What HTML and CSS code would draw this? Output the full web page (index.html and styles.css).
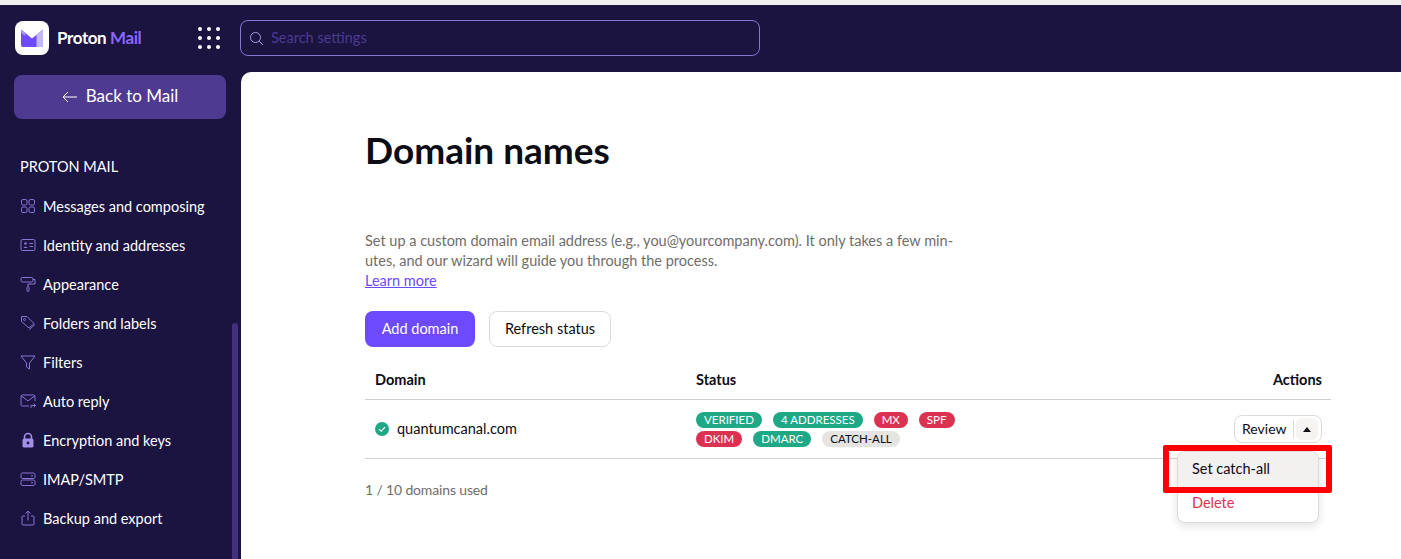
FILE: index.html
```html
<!DOCTYPE html>
<html lang="en">
<head>
<meta charset="utf-8">
<title>Domain names</title>
<link rel="stylesheet" href="styles.css">
</head>
<body>
<div class="topstrip"></div>
<header class="header">
  <div class="brand">
    <span class="logo-tile">
      <svg width="24" height="20" viewBox="0 0 24 20">
        <path d="M1 1.5 L12 10.5 L23 1.5 V17 a2 2 0 0 1 -2 2 H3 a2 2 0 0 1 -2 -2 Z" fill="#6d4aff"/>
        <path d="M16.5 6.8 L23 1.5 V17 a2 2 0 0 1 -2 2 H16.5 Z" fill="#c4b7ff"/>
        <path d="M1 1.5 L5 4.8 V8 L1 4.8 Z" fill="#a995ff"/>
      </svg>
    </span>
    <span class="wordmark">Proton <span class="wordmark-mail">Mail</span></span>
  </div>
  <div class="apps">
    <i></i><i></i><i></i><i></i><i></i><i></i><i></i><i></i><i></i>
  </div>
  <div class="search">
    <svg width="15" height="15" viewBox="0 0 15 15" fill="none" stroke="#a99bdc" stroke-width="1"><circle cx="6.5" cy="6.5" r="5"/><path d="M10.2 10.2 L14 14"/></svg>
    <span class="search-text">Search settings</span>
  </div>
</header>
<div class="body-row">
  <aside class="sidebar">
    <a class="back"><svg width="16" height="12" viewBox="0 0 16 12" fill="none" stroke="#fff" stroke-width="1"><path d="M15 6 H1 M6 1 L1 6 L6 11"/></svg><span class="back-text">Back to Mail</span></a>
    <div class="nav-title">PROTON MAIL</div>
    <nav class="nav">
      <a class="nav-item"><svg class="ico" viewBox="0 0 16 16"><rect x="1.5" y="1.5" width="5.5" height="5.5" rx="1.5"/><rect x="9" y="1.5" width="5.5" height="5.5" rx="1.5"/><rect x="1.5" y="9" width="5.5" height="5.5" rx="1.5"/><rect x="9" y="9" width="5.5" height="5.5" rx="1.5"/></svg><span class="nav-label">Messages and composing</span></a>
      <a class="nav-item"><svg class="ico" viewBox="0 0 16 16"><rect x="1" y="2.5" width="14" height="11" rx="1.5"/><circle cx="5.5" cy="6.5" r="1.3" fill="#8a75d6" stroke="none"/><path d="M3.3 11 q2.2 -3 4.4 0 z" fill="#8a75d6" stroke="none"/><path d="M9.5 6.5 H13 M9.5 9.5 H13"/></svg><span class="nav-label">Identity and addresses</span></a>
      <a class="nav-item"><svg class="ico" viewBox="0 0 16 16"><rect x="1" y="1.5" width="12" height="4.5" rx="1.5"/><path d="M13 3.5 H15 V8 H8 V10.5"/><rect x="7" y="10.5" width="2" height="5" rx="1"/></svg><span class="nav-label">Appearance</span></a>
      <a class="nav-item"><svg class="ico" viewBox="0 0 16 16"><path d="M1.5 1.5 H7 L14 8.5 L9 13 L1.5 6.5 Z"/><path d="M9 14.8 L15 9.5"/><circle cx="4.5" cy="4.5" r="1"/></svg><span class="nav-label">Folders and labels</span></a>
      <a class="nav-item"><svg class="ico" viewBox="0 0 16 16"><path d="M1 2 H15 L9.5 9 V15 L6.5 13 V9 Z"/></svg><span class="nav-label">Filters</span></a>
      <a class="nav-item"><svg class="ico" viewBox="0 0 16 16"><path d="M9 13 H2.5 A1.5 1.5 0 0 1 1 11.5 V3.5 A1.5 1.5 0 0 1 2.5 2 H13.5 A1.5 1.5 0 0 1 15 3.5 V8"/><path d="M1.5 3 L8 8 L14.5 3"/><path d="M11 15 V12.5 H15.5 M13.8 10.8 L15.5 12.5 L13.8 14.2"/></svg><span class="nav-label">Auto reply</span></a>
      <a class="nav-item"><svg class="ico" viewBox="0 0 16 16"><path d="M4.5 7 V5 a3.5 3.5 0 0 1 7 0 V7" fill="none" stroke="#a18fe6" stroke-width="1.6"/><rect x="2.5" y="6.5" width="11" height="9" rx="1.5" fill="#a18fe6" stroke="none"/><circle cx="8" cy="11" r="1.4" fill="#1b1340" stroke="none"/></svg><span class="nav-label">Encryption and keys</span></a>
      <a class="nav-item"><svg class="ico" viewBox="0 0 16 16"><rect x="1" y="2" width="14" height="5.5" rx="1.5"/><rect x="1" y="9" width="14" height="5.5" rx="1.5"/><path d="M11 4.8 H13 M11 11.8 H13"/></svg><span class="nav-label">IMAP/SMTP</span></a>
      <a class="nav-item"><svg class="ico" viewBox="0 0 16 16"><path d="M5 6 H3 A1 1 0 0 0 2 7 V14 A1 1 0 0 0 3 15 H13 A1 1 0 0 0 14 14 V7 A1 1 0 0 0 13 6 H11"/><path d="M8 10.5 V1 M5.5 3.5 L8 1 L10.5 3.5"/></svg><span class="nav-label">Backup and export</span></a>
    </nav>
    <div class="scrollthumb"></div>
  </aside>
  <main class="main">
    <div class="content">
      <h1 class="title">Domain names</h1>
      <p class="intro">Set up a custom domain email address (e.g., you@yourcompany.com). It only takes a few min-<br>utes, and our wizard will guide you through the process.<br><a class="learn">Learn more</a></p>
      <div class="actions">
        <button class="btn btn-primary">Add domain</button>
        <button class="btn btn-outline">Refresh status</button>
      </div>
      <div class="table">
        <div class="row row-head">
          <div class="c-domain">Domain</div>
          <div class="c-status">Status</div>
          <div class="c-actions">Actions</div>
        </div>
        <div class="row row-body">
          <div class="c-domain domain-cell">
            <svg width="14" height="14" viewBox="0 0 14 14"><circle cx="7" cy="7" r="7" fill="#1ea885"/><path d="M4 7.2 L6.2 9.2 L10 5.2" fill="none" stroke="#fff" stroke-width="1.1"/></svg>
            <span class="domain-name">quantumcanal.com</span>
          </div>
          <div class="c-status badges">
            <span class="badge green">VERIFIED</span>
            <span class="badge green">4 ADDRESSES</span>
            <span class="badge red">MX</span>
            <span class="badge red">SPF</span>
            <span class="badge red">DKIM</span>
            <span class="badge green">DMARC</span>
            <span class="badge grey">CATCH-ALL</span>
          </div>
          <div class="c-actions">
            <div class="split">
              <span class="split-label">Review</span>
              <span class="split-caret"><svg width="8" height="5" viewBox="0 0 8 5"><path d="M4 0 L8 5 H0 Z" fill="#0c0c14"/></svg></span>
            </div>
          </div>
        </div>
      </div>
      <p class="usage">1 / 10 domains used</p>
    </div>
    <div class="menu">
      <div class="menu-item menu-active">Set catch-all</div>
      <div class="menu-item menu-danger">Delete</div>
    </div>
    <div class="highlight"></div>
  </main>
</div>
</body>
</html>
```
FILE: styles.css
```css
* { box-sizing: border-box; }
html, body { margin: 0; padding: 0; height: 100%; overflow: hidden; }
body {
  width: 1401px;
  height: 559px;
  display: flex;
  flex-direction: column;
  background: #1b1340;
  font-family: Lato, "Liberation Sans", sans-serif;
  font-size: 14.5px;
  color: #0c0c14;
}
.topstrip { height: 5px; background: #f0f0f0; flex: none; }
.header {
  height: 67px;
  flex: none;
  display: flex;
  align-items: center;
  padding: 0 0 1px 15px;
}
.brand { display: flex; align-items: center; width: 183px; }
.logo-tile {
  width: 34px;
  height: 34px;
  border-radius: 8px;
  background: #fff;
  display: flex;
  align-items: center;
  justify-content: center;
  margin-right: 8px;
}
.wordmark { color: #fff; font-size: 17px; font-weight: 700; letter-spacing: -0.4px; margin-top: -1px; }
.wordmark-mail { color: #8468ff; }
.apps {
  width: 22px;
  height: 22px;
  display: grid;
  grid-template-columns: repeat(3, 4px);
  grid-template-rows: repeat(3, 4px);
  justify-content: space-between;
  align-content: space-between;
}
.apps i { width: 4px; height: 4px; border-radius: 50%; background: #fff; }
.search {
  margin-left: 20px;
  width: 520px;
  height: 36px;
  border: 1px solid #8a75d6;
  border-radius: 8px;
  display: flex;
  align-items: center;
  gap: 7px;
  padding-left: 8px;
  color: #4c3a93;
}
.search-text { margin-top: -2px; }
.body-row { flex: 1; display: flex; min-height: 0; }
.sidebar { position: relative; width: 241px; flex: none; padding: 3px 0 0 14px; }
.back {
  width: 212px;
  height: 44px;
  border-radius: 8px;
  background: #4f3a91;
  color: #fff;
  font-size: 17px;
  display: flex;
  align-items: center;
  justify-content: center;
  gap: 8px;
}
.back-text { margin-top: -3px; }
.nav-title { color: #fff; margin: 39px 0 0 6px; line-height: 17px; }
.nav { display: flex; flex-direction: column; margin: 11px 0 0 6px; }
.nav-item {
  height: 39px;
  display: flex;
  align-items: center;
  gap: 7px;
  color: #fff;
}
.nav-label { margin-top: 1px; }
.ico { width: 16px; height: 16px; flex: none; fill: none; stroke: #8a75d6; stroke-width: 1; }
.scrollthumb {
  position: absolute;
  left: 232px;
  top: 251px;
  bottom: 0;
  width: 6px;
  background: #42307f;
  border-radius: 3px 3px 0 0;
}
.main {
  position: relative;
  flex: 1;
  background: #fff;
  border-top-left-radius: 10px;
}
.content { padding: 0 70px 0 124px; }
.title { margin: 55px 0 0; font-size: 37px; line-height: 46px; font-weight: 700; color: #0c0c14; }
.intro { margin: 58px 0 0; width: 620px; line-height: 20px; color: #706d6b; }
.learn { color: #6d4aff; text-decoration: underline; }
.actions { margin-top: 20px; display: flex; gap: 14px; }
.btn { height: 36px; border-radius: 8px; font: inherit; padding: 0 0 2px; }
.btn-primary { width: 110px; background: #6d4aff; border: 0; color: #fff; }
.btn-outline { width: 122px; background: #fff; border: 1px solid #dedbd9; color: #0c0c14; }
.table { margin-top: 16px; }
.row { display: flex; border-bottom: 1px solid #d1cfcd; align-items: center; }
.row-head { height: 37px; font-weight: 700; padding-bottom: 3px; }
.row-body { height: 59px; }
.c-domain { width: 331px; padding-left: 10px; flex: none; }
.c-status { width: 280px; flex: none; }
.c-actions { flex: 1; display: flex; justify-content: flex-end; padding-right: 9px; }
.domain-cell { display: flex; align-items: center; gap: 8px; }
.domain-name { margin-top: -1px; }
.badges { display: flex; flex-wrap: wrap; gap: 3px 11px; font-size: 11.5px; }
.badge { height: 16px; line-height: 16px; border-radius: 8px; padding: 0 8px; color: #fff; }
.green { background: #1ea885; }
.red { background: #dc3251; }
.grey { background: #e5e4e1; color: #0c0c14; }
.split {
  width: 88px;
  height: 28px;
  border: 1px solid #dedbd9;
  border-radius: 8px;
  display: flex;
  align-items: center;
  padding: 0 3px 0 7px;
  justify-content: space-between;
  font-size: 14px;
}
.split-label { border-right: 1px solid #dedbd9; padding-right: 7px; line-height: 18px; }
.split-caret {
  width: 22px;
  height: 22px;
  background: #f5f4f2;
  border-radius: 6px;
  display: flex;
  align-items: center;
  justify-content: center;
}
.usage { margin: 22px 0 0; color: #706d6b; font-size: 14px; letter-spacing: -0.15px; }
.menu {
  position: absolute;
  left: 936px;
  top: 379px;
  width: 142px;
  height: 72px;
  background: #fff;
  border: 1px solid #dedcda;
  border-radius: 8px;
  box-shadow: 0 3px 10px rgba(0,0,0,.12);
  overflow: hidden;
}
.menu-item { height: 34px; line-height: 30px; padding-left: 14px; }
.menu-active { background: #f2f1ef; height: 36px; line-height: 33px; }
.menu-danger { color: #dc3251; }
.highlight {
  position: absolute;
  left: 922px;
  top: 373px;
  width: 169px;
  height: 48px;
  border: 6px solid #fe0000;
  border-radius: 2px;
}
```
